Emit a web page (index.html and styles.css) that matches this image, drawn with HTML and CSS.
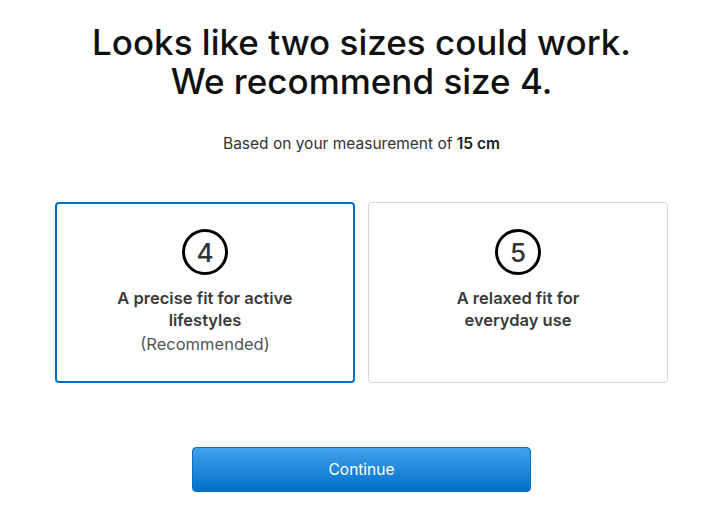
FILE: index.html
```html
<!DOCTYPE html>
<html lang="en">
<head>
    <meta charset="UTF-8">
    <meta name="viewport" content="width=device-width, initial-scale=1.0">
    <title>Size recommendation</title>
    <link rel="stylesheet" href="styles.css">
</head>
<body>
    <div class="page">
        <h1 class="title">Looks like two sizes could work.<br>We recommend size 4.</h1>
        <p class="subtitle">Based on your measurement of <strong>15 cm</strong></p>

        <div class="options">
            <div class="option selected">
                <div class="size-badge">4</div>
                <div class="option-text">A precise fit for active<br>lifestyles</div>
                <div class="option-note">(Recommended)</div>
            </div>
            <div class="option">
                <div class="size-badge">5</div>
                <div class="option-text">A relaxed fit for<br>everyday use</div>
            </div>
        </div>

        <div class="actions">
            <button class="continue">Continue</button>
        </div>
    </div>
</body>
</html>
```

FILE: styles.css
```css
body {
    margin: 0;
    font-family: Inter, 'Liberation Sans', Arial, sans-serif;
    background: #fff;
    color: #1d1d1f;
}
.page {
    padding: 0 60px 0 55px;
}
.title {
    margin: 23px 0 0;
    font-size: 35px;
    line-height: 39px;
    font-weight: 500;
    text-align: center;
    color: #111;
}
.subtitle {
    margin: 33px 0 0;
    font-size: 15.5px;
    line-height: 20px;
    text-align: center;
    color: #333;
}
.subtitle strong {
    font-weight: 600;
    color: #222;
}
.options {
    display: grid;
    grid-template-columns: 1fr 1fr;
    gap: 13px;
    margin-top: 48px;
}
.option {
    height: 181px;
    border: 1px solid #d6d6d6;
    border-radius: 4px;
    display: flex;
    flex-direction: column;
    align-items: center;
    padding-top: 26px;
    box-sizing: border-box;
    text-align: center;
}
.option.selected {
    border: 2px solid #0070c9;
    padding-top: 25px;
}
.size-badge {
    width: 40px;
    height: 40px;
    border: 3px solid #000;
    border-radius: 50%;
    display: flex;
    align-items: center;
    justify-content: center;
    font-size: 26px;
    font-weight: 500;
    color: #333;
}
.option-text {
    margin-top: 12px;
    font-size: 16.5px;
    line-height: 22px;
    font-weight: 600;
    color: #3a3a3a;
}
.option-note {
    font-size: 16.5px;
    line-height: 26px;
    color: #555;
}
.actions {
    display: flex;
    justify-content: center;
    margin-top: 64px;
}
.continue {
    width: 339px;
    height: 45px;
    border: 1px solid #0a6fc2;
    border-radius: 4px;
    background: linear-gradient(#42a1ec, #0070c9);
    color: #fff;
    font-family: inherit;
    font-size: 15.5px;
    cursor: pointer;
}
```
